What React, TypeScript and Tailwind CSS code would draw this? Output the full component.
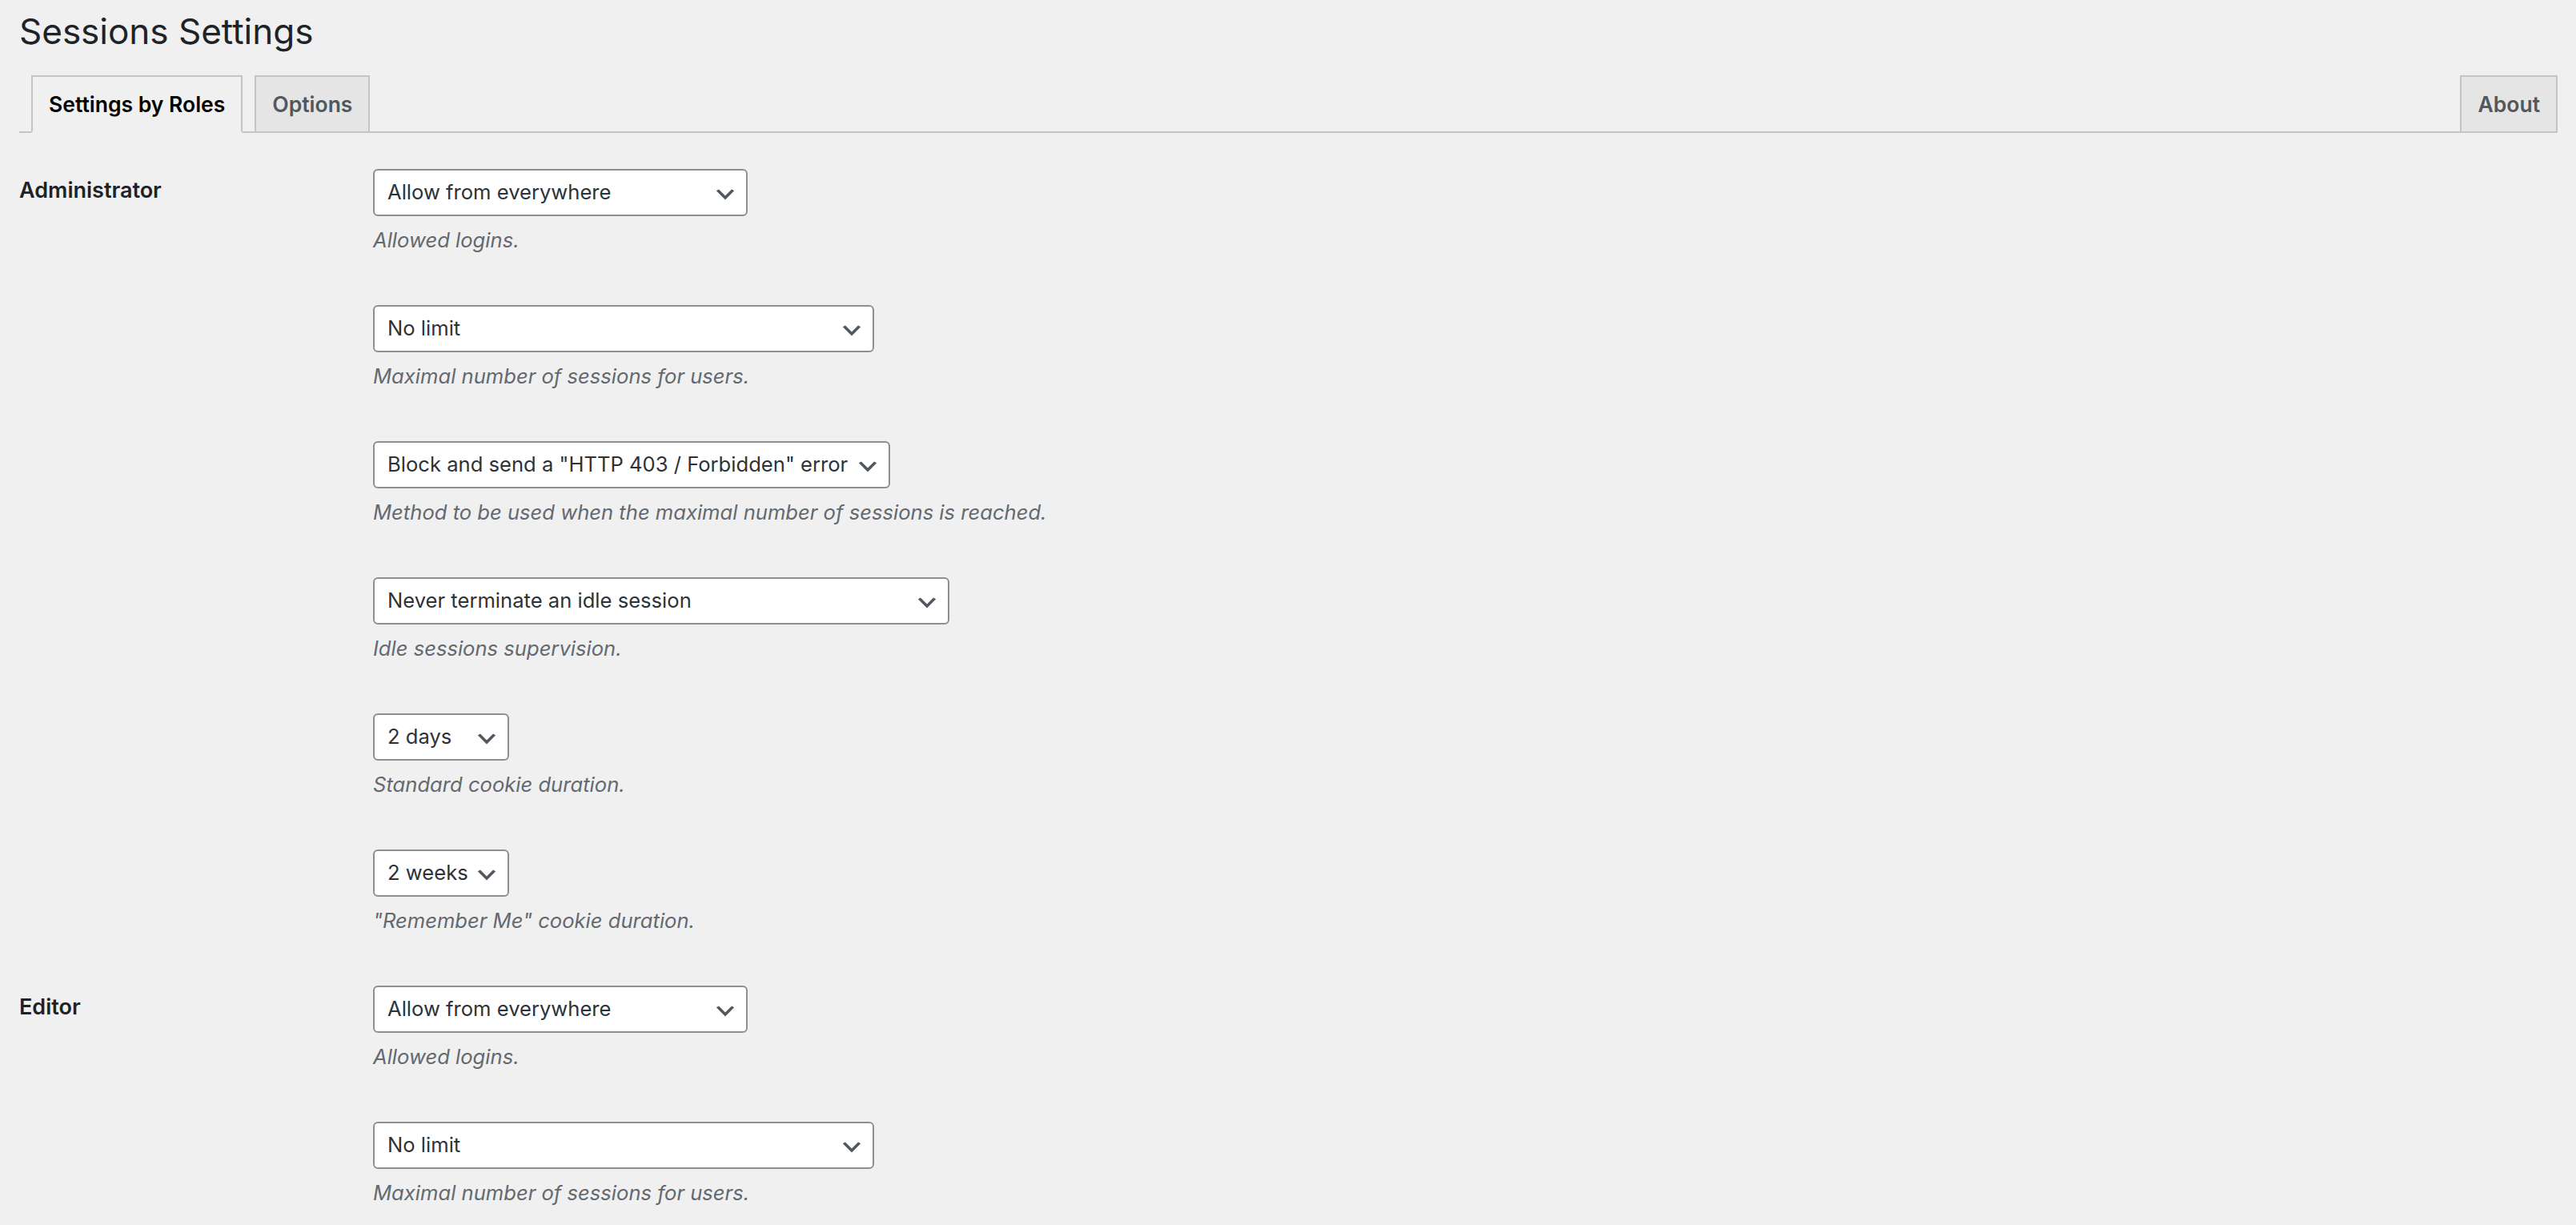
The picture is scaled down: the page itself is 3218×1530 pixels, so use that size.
import React from "react";

const font = { fontFamily: "Inter, 'Noto Sans', sans-serif" };

function Chevron() {
  return (
    <svg
      className="absolute right-[10px] top-[14px] w-[32px] h-[32px]"
      viewBox="0 0 20 20"
      aria-hidden="true"
    >
      <path d="M5 6l5 5 5-5 2 1-7 7-7-7 2-1z" fill="#50575e" />
    </svg>
  );
}

function Select({ value, width }: { value: string; width: string }) {
  return (
    <div
      className={`relative h-[59px] ${width} bg-white border-2 border-[#8c8f94] rounded-[6px] pl-[16px] pr-[48px] flex items-center text-[25.6px] text-[#2c3338] whitespace-nowrap overflow-hidden`}
    >
      <span>{value}</span>
      <Chevron />
    </div>
  );
}

type Setting = { value: string; width: string; desc: string };

function Row({ label, setting }: { label?: string; setting: Setting }) {
  return (
    <div className="flex">
      <div className="w-[442px] shrink-0 pt-[40px] text-[27px] leading-[36px] font-semibold text-[#1d2327]">
        {label}
      </div>
      <div className="pt-[31px] pb-[30px] flex flex-col">
        <Select value={setting.value} width={setting.width} />
        <p className="mt-[9px] text-[25.6px] leading-[42px] italic text-[#646970] h-[41px]">
          {setting.desc}
        </p>
      </div>
    </div>
  );
}

const settings: Setting[] = [
  { value: "Allow from everywhere", width: "w-[468px]", desc: "Allowed logins." },
  { value: "No limit", width: "w-[626px]", desc: "Maximal number of sessions for users." },
  {
    value: 'Block and send a "HTTP 403 / Forbidden" error',
    width: "w-[646px]",
    desc: "Method to be used when the maximal number of sessions is reached.",
  },
  { value: "Never terminate an idle session", width: "w-[720px]", desc: "Idle sessions supervision." },
  { value: "2 days", width: "w-[170px]", desc: "Standard cookie duration." },
  { value: "2 weeks", width: "w-[170px]", desc: '"Remember Me" cookie duration.' },
];

const tabBase = "border-2 border-[#c3c4c7] px-[20px] py-[10px] text-[26.5px] leading-[48px] font-semibold";

export default function App() {
  return (
    <div className="min-h-screen bg-[#f0f0f1] pl-[24px] pr-[23px] overflow-hidden" style={font}>
      <h1 className="pt-[9px] text-[44px] leading-[60px] font-normal text-[#1d2327]">
        Sessions Settings
      </h1>
      <div className="mt-[25px] flex items-end border-b-2 border-[#c3c4c7]">
        <div className={`${tabBase} ml-[15px] -mb-[2px] border-b-[#f0f0f1] bg-[#f0f0f1] text-black`}>
          Settings by Roles
        </div>
        <div className={`${tabBase} ml-[15px] border-b-0 bg-[#e5e5e5] text-[#50575e]`}>
          Options
        </div>
        <div className={`${tabBase} ml-auto border-b-0 bg-[#e5e5e5] text-[#50575e]`}>
          About
        </div>
      </div>
      <div className="mt-[14px]">
        {settings.map((s, i) => (
          <Row key={"a" + i} label={i === 0 ? "Administrator" : undefined} setting={s} />
        ))}
        {settings.slice(0, 2).map((s, i) => (
          <Row key={"e" + i} label={i === 0 ? "Editor" : undefined} setting={s} />
        ))}
      </div>
    </div>
  );
}
